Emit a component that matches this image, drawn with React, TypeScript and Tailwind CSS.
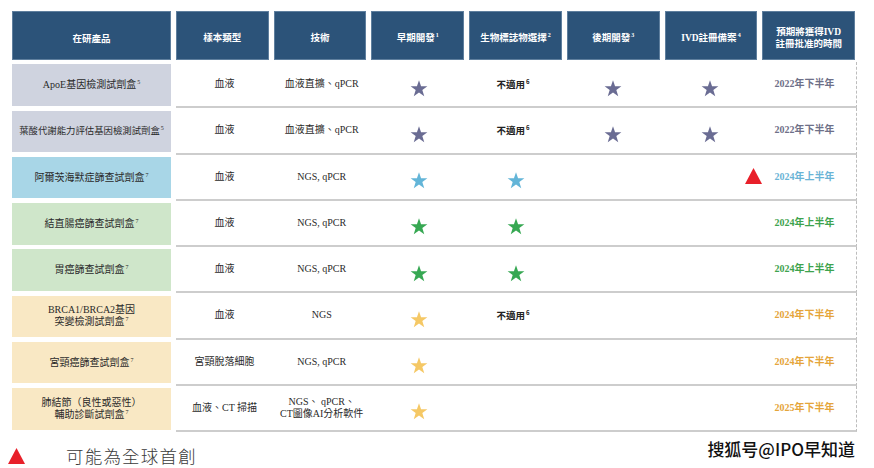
import React, { FC, ReactNode } from 'react';

type Row = {
    name: ReactNode;
    cellBg: string;
    sample: ReactNode;
    tech: ReactNode;
    bio: 'star' | 'na' | null;
    later: boolean;
    starFill: string;
    date: string;
    dateColor: string;
    firstInWorld?: boolean;
};

const Sup: FC<{ n: string }> = ({ n }) => (
    <sup className="text-[6px] relative -top-[4px] ml-[1px]">{n}</sup>
);

const Star: FC<{ fill: string }> = ({ fill }) => (
    <svg width="18" height="17" viewBox="0 0 24 23" className="translate-y-[4px]">
        <polygon
            points="12,0.5 14.8,8.4 23.3,8.4 16.5,13.5 19.1,22 12,16.9 4.9,22 7.5,13.5 0.7,8.4 9.2,8.4"
            fill={fill}
        />
    </svg>
);

const Triangle: FC<{ className?: string }> = ({ className }) => (
    <svg width="17" height="16" viewBox="0 0 17 16" className={className}>
        <polygon points="8.5,0 17,16 0,16" fill="#e8202a" />
    </svg>
);

const ROWS: Row[] = [
    {
        name: <>ApoE基因檢測試劑盒<Sup n="5" /></>,
        cellBg: 'bg-[#cfd3df]',
        sample: '血液',
        tech: '血液直擴、qPCR',
        bio: 'na',
        later: true,
        starFill: '#6a6c93',
        date: '2022年下半年',
        dateColor: 'text-[#6e7088]',
    },
    {
        name: <span className="whitespace-nowrap text-[9.4px]">葉酸代謝能力評估基因檢測試劑盒<Sup n="5" /></span>,
        cellBg: 'bg-[#cfd3df]',
        sample: '血液',
        tech: '血液直擴、qPCR',
        bio: 'na',
        later: true,
        starFill: '#6a6c93',
        date: '2022年下半年',
        dateColor: 'text-[#6e7088]',
    },
    {
        name: <>阿爾茨海默症篩查試劑盒<Sup n="7" /></>,
        cellBg: 'bg-[#a8d6e7]',
        sample: '血液',
        tech: 'NGS, qPCR',
        bio: 'star',
        later: false,
        starFill: '#63b5d8',
        date: '2024年上半年',
        dateColor: 'text-[#6ab4d6]',
        firstInWorld: true,
    },
    {
        name: <>結直腸癌篩查試劑盒<Sup n="7" /></>,
        cellBg: 'bg-[#cfe6ca]',
        sample: '血液',
        tech: 'NGS, qPCR',
        bio: 'star',
        later: false,
        starFill: '#37a853',
        date: '2024年上半年',
        dateColor: 'text-[#3ea34e]',
    },
    {
        name: <>胃癌篩查試劑盒<Sup n="7" /></>,
        cellBg: 'bg-[#cfe6ca]',
        sample: '血液',
        tech: 'NGS, qPCR',
        bio: 'star',
        later: false,
        starFill: '#37a853',
        date: '2024年上半年',
        dateColor: 'text-[#3ea34e]',
    },
    {
        name: <>BRCA1/BRCA2基因<br />突變檢測試劑盒<Sup n="7" /></>,
        cellBg: 'bg-[#f9e8c4]',
        sample: '血液',
        tech: 'NGS',
        bio: 'na',
        later: false,
        starFill: '#f5c865',
        date: '2024年下半年',
        dateColor: 'text-[#e5a53a]',
    },
    {
        name: <>宮頸癌篩查試劑盒<Sup n="7" /></>,
        cellBg: 'bg-[#f9e8c4]',
        sample: '宮頸脫落細胞',
        tech: 'NGS, qPCR',
        bio: null,
        later: false,
        starFill: '#f5c865',
        date: '2024年下半年',
        dateColor: 'text-[#e5a53a]',
    },
    {
        name: <>肺結節（良性或惡性）<br />輔助診斷試劑盒<Sup n="7" /></>,
        cellBg: 'bg-[#f9e8c4]',
        sample: '血液、CT 掃描',
        tech: <>NGS、 qPCR、<br />CT圖像AI分析軟件</>,
        bio: null,
        later: false,
        starFill: '#f5c865',
        date: '2025年下半年',
        dateColor: 'text-[#e5a53a]',
    },
];

const HEADERS: ReactNode[] = [
    '樣本類型',
    '技術',
    <>早期開發<Sup n="1" /></>,
    <>生物標誌物選擇<Sup n="2" /></>,
    <>後期開發<Sup n="3" /></>,
    <>IVD註冊備案<Sup n="4" /></>,
    <>預期將獲得IVD<br />註冊批准的時間</>,
];

const Cell: FC<{ children?: ReactNode; className?: string }> = ({ children, className = '' }) => (
    <div className={`relative flex items-center justify-center text-center ${className}`}>{children}</div>
);

export default function App() {
    return (
        <div className="w-[874px] h-[468px] overflow-hidden bg-white pl-[12px] pt-[11px] font-['Liberation_Serif','Noto_Sans_CJK_TC',serif] text-[#2a2a2a]">
            {/* Header */}
            <div className="flex h-[49px]">
                <div className="w-[159px] shrink-0 bg-[#2c5379] border border-[#5f7f9e] flex items-center justify-center pt-[5px] text-white text-[9.5px] font-bold font-['Noto_Sans_CJK_TC',sans-serif]">
                    在研產品
                </div>
                <div className="ml-[5px] w-[679px] grid grid-cols-7 gap-x-[5px]">
                    {HEADERS.map((h, i) => (
                        <div
                            key={i}
                            className="bg-[#2c5379] border border-[#5f7f9e] flex items-center justify-center text-center pt-[4px] text-white text-[9.5px] leading-[12px] font-bold font-['Liberation_Serif','Noto_Sans_CJK_TC',serif]"
                        >
                            <span>{h}</span>
                        </div>
                    ))}
                </div>
            </div>

            {/* Rows */}
            <div className="mt-[2px] flex flex-col">
                {ROWS.map((r, i) => (
                    <div key={i} className="flex h-[46.25px]">
                        <div className="w-[159px] shrink-0 py-[2.3px]">
                            <div className={`h-full flex items-center justify-center text-center px-[2px] text-[10px] leading-[12px] ${r.cellBg}`}>
                                <span>{r.name}</span>
                            </div>
                        </div>
                        <div className="ml-[5px] w-[681px] grid grid-cols-7 border-b-2 border-r border-[#cdcdcd] [border-right-style:dashed] border-r-[#bdbdbd] text-[10px] leading-[12px]">
                            <Cell>{r.sample}</Cell>
                            <Cell>{r.tech}</Cell>
                            <Cell><Star fill={r.starFill} /></Cell>
                            <Cell>
                                {r.bio === 'star' && <Star fill={r.starFill} />}
                                {r.bio === 'na' && (
                                    <span className="font-bold text-[9.5px] text-[#222] font-['Noto_Sans_CJK_TC',sans-serif] -ml-[6px]">
                                        不適用<Sup n="6" />
                                    </span>
                                )}
                            </Cell>
                            <Cell>{r.later && <Star fill={r.starFill} />}</Cell>
                            <Cell>{r.later && <Star fill={r.starFill} />}</Cell>
                            <Cell>
                                {r.firstInWorld && (
                                    <Triangle className="absolute left-[-14px] top-[13px]" />
                                )}
                                <span className={`font-bold ml-[-6px] ${r.dateColor}`}>{r.date}</span>
                            </Cell>
                        </div>
                    </div>
                ))}
            </div>

            {/* Legend + watermark */}
            <div className="flex justify-between items-start pr-[19px]">
                <div className="flex items-center mt-[15px] ml-[-4px]">
                    <Triangle />
                    <span className="ml-[41px] text-[17.5px] leading-[18px] tracking-[1.2px] text-[#3a3a3a] font-['Noto_Sans_CJK_TC',sans-serif] font-light">
                        可能為全球首創
                    </span>
                </div>
                <div className="mt-[7px] text-[17px] leading-[20px] font-medium text-[#111] font-['Noto_Sans_CJK_SC',sans-serif] [text-shadow:0_0_2px_#fff]">
                    搜狐号@IPO早知道
                </div>
            </div>
        </div>
    );
}
